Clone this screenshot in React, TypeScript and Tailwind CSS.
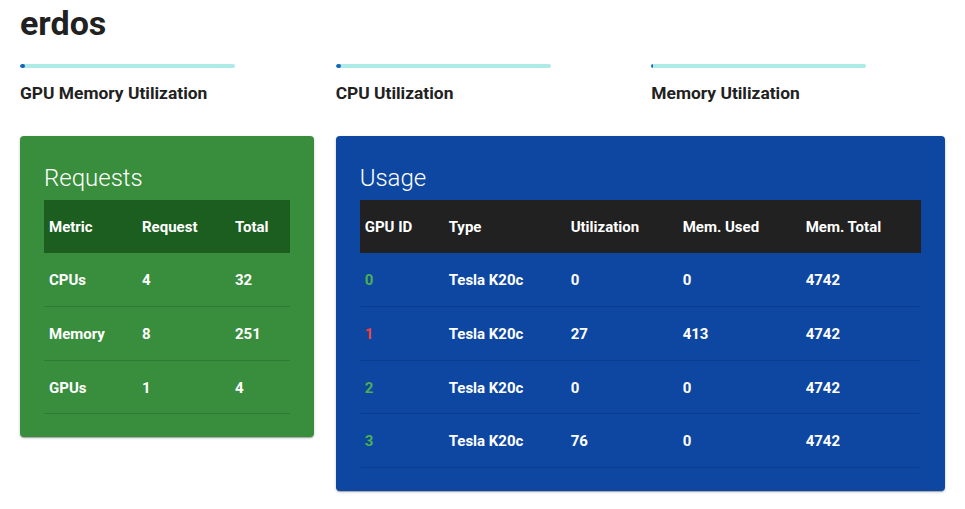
import React from "react";

const bars = [
  { label: "GPU Memory Utilization", pct: 5 },
  { label: "CPU Utilization", pct: 5 },
  { label: "Memory Utilization", pct: 2 },
];

const requests = [
  ["CPUs", "4", "32"],
  ["Memory", "8", "251"],
  ["GPUs", "1", "4"],
];

const gpus = [
  { id: "0", ok: true, type: "Tesla K20c", util: "0", used: "0", total: "4742" },
  { id: "1", ok: false, type: "Tesla K20c", util: "27", used: "413", total: "4742" },
  { id: "2", ok: true, type: "Tesla K20c", util: "0", used: "0", total: "4742" },
  { id: "3", ok: true, type: "Tesla K20c", util: "76", used: "0", total: "4742" },
];

const shadow =
  "shadow-[0_1px_3px_rgba(0,0,0,0.2),0_1px_1px_rgba(0,0,0,0.14),0_2px_1px_-1px_rgba(0,0,0,0.12)]";

const App = () => {
  return (
    <div className="min-h-screen bg-white px-5 font-['Roboto',sans-serif] text-[#212121]">
      <h1 className="pt-[3px] text-[34px] font-bold leading-[40px]">erdos</h1>

      <div className="mt-[21px] grid grid-cols-3 gap-x-[22px]">
        {bars.map((b) => (
          <div key={b.label}>
            <div className="flex h-1 w-[215px] overflow-hidden rounded-full bg-[#aeeae6]">
              <div className="h-full rounded-full bg-[#1565c0]" style={{ width: `${b.pct}px` }} />
            </div>
            <p className="mt-[13px] text-[17.4px] font-bold leading-6">{b.label}</p>
          </div>
        ))}
      </div>

      <div className="mt-[31px] grid grid-cols-3 items-start gap-x-[22px]">
        <div className={`rounded bg-[#388e3c] px-6 pt-[26px] pb-[23px] text-white ${shadow}`}>
          <h2 className="mb-[6px] text-2xl font-light leading-8">Requests</h2>
          <table className="w-full border-collapse text-left text-[15px] font-bold">
            <thead>
              <tr className="h-[53px] bg-[#1b5e20]">
                <th className="w-[93px] pt-[2px] pl-[5px] font-bold">Metric</th>
                <th className="w-[93px] pt-[2px] pl-[5px] font-bold">Request</th>
                <th className="pt-[2px] pl-[5px] font-bold">Total</th>
              </tr>
            </thead>
            <tbody>
              {requests.map((r) => (
                <tr key={r[0]} className="h-[53.6px] border-b border-[#2f7a33]">
                  {r.map((c, i) => (
                    <td key={i} className="pt-[2px] pl-[5px]">{c}</td>
                  ))}
                </tr>
              ))}
            </tbody>
          </table>
        </div>

        <div className={`col-span-2 rounded bg-[#0d47a1] px-6 pt-[26px] pb-[23px] text-white ${shadow}`}>
          <h2 className="mb-[6px] text-2xl font-light leading-8">Usage</h2>
          <table className="w-full border-collapse text-left text-[15px] font-bold">
            <thead>
              <tr className="h-[53px] bg-[#212121]">
                <th className="w-[84px] pt-[2px] pl-[5px] font-bold">GPU ID</th>
                <th className="w-[122px] pt-[2px] pl-[5px] font-bold">Type</th>
                <th className="w-[112px] pt-[2px] pl-[5px] font-bold">Utilization</th>
                <th className="w-[123px] pt-[2px] pl-[5px] font-bold">Mem. Used</th>
                <th className="pt-[2px] pl-[5px] font-bold">Mem. Total</th>
              </tr>
            </thead>
            <tbody>
              {gpus.map((g) => (
                <tr key={g.id} className="h-[53.6px] border-b border-[#0b3d8e]">
                  <td className={`pt-[2px] pl-[5px] ${g.ok ? "text-[#4caf50]" : "text-[#f44336]"}`}>{g.id}</td>
                  <td className="pt-[2px] pl-[5px]">{g.type}</td>
                  <td className="pt-[2px] pl-[5px]">{g.util}</td>
                  <td className="pt-[2px] pl-[5px]">{g.used}</td>
                  <td className="pt-[2px] pl-[5px]">{g.total}</td>
                </tr>
              ))}
            </tbody>
          </table>
        </div>
      </div>
    </div>
  );
};

export default App;
